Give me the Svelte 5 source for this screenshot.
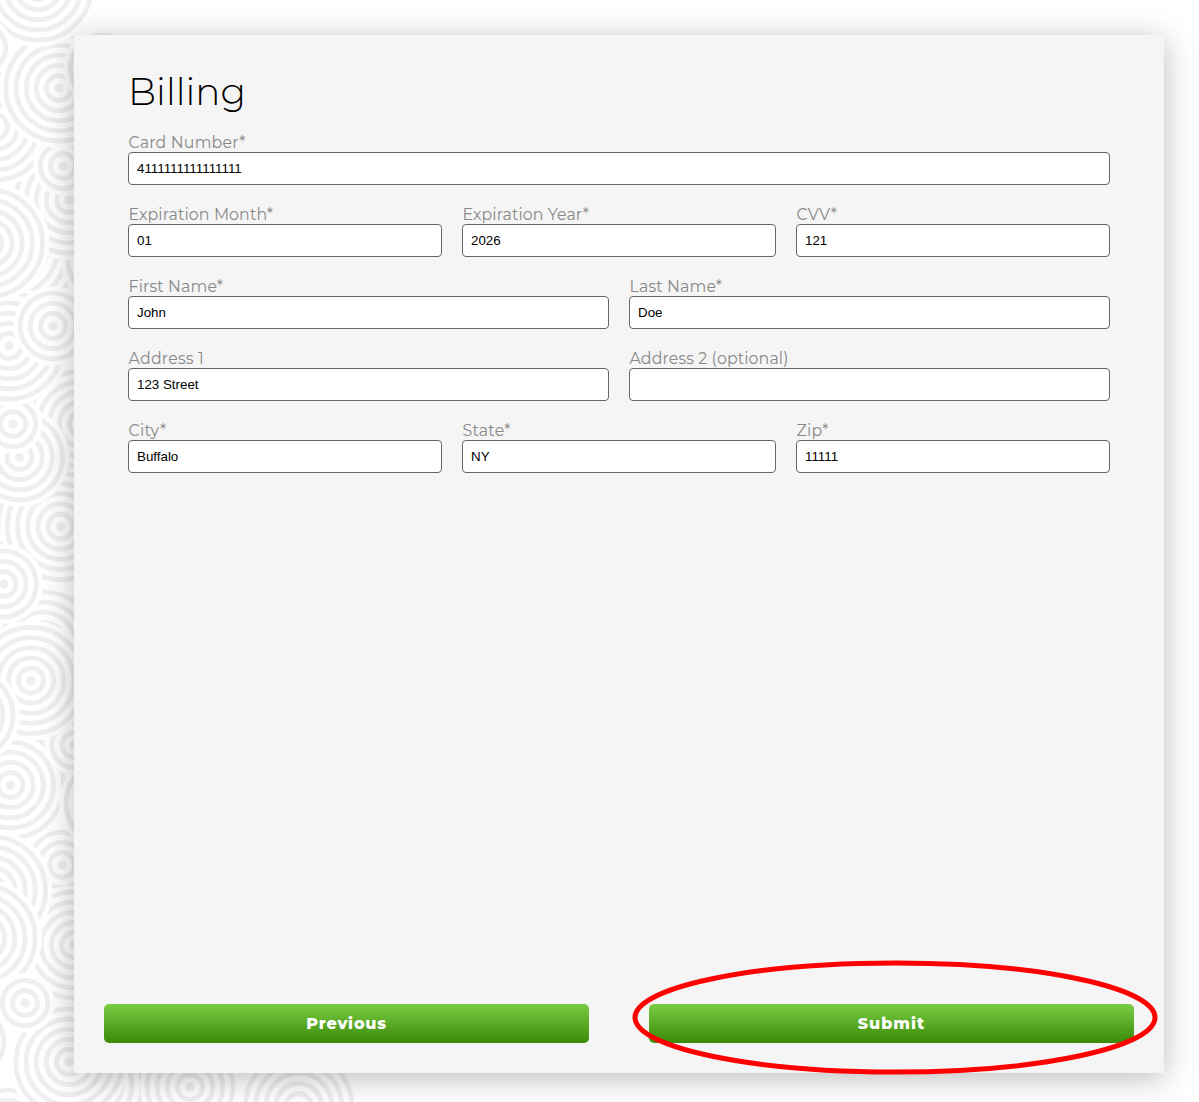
<script>
  // Decorative discs, painted back to front: [centre x, centre y, ring count]
  const discs = [
    [5, 245, 7], [101, 262, 3], [69, 200, 5], [-5, 127, 5], [63, 166, 2],
    [59, 88, 5], [38, -13, 5], [103, 68, 3], [-17, 48, 2],
    [43, 645, 5], [-30, 515, 4], [82, 424, 5], [60.5, 526.5, 5],
    [19.5, 457, 4], [13, 424, 2], [9, 346, 5], [-10.6, 243, 5], [53, 326, 3],
    [62, 865, 3], [10.5, 785, 5], [109, 803, 4], [74.5, 745, 2],
    [31, 680.5, 5], [-30, 715, 4], [3.5, 584, 3],
    [74, 945, 5], [-7.6, 890, 5], [-18, 938, 5],
    [-29, 1042, 3], [8, 1123, 3], [89, 1085, 5], [69, 1062, 5], [25, 1003, 2],
    [298.7, 1106, 5], [190, 1087, 4]
  ];

  const rows = [
    [{ label: 'Card Number*', width: 117, value: '4111111111111111' }],
    [
      { label: 'Expiration Month*', width: 144.5, value: '01' },
      { label: 'Expiration Year*', width: 126.5, value: '2026' },
      { label: 'CVV*', width: 40.5, value: '121' }
    ],
    [
      { label: 'First Name*', width: 94.5, value: 'John' },
      { label: 'Last Name*', width: 92.5, value: 'Doe' }
    ],
    [
      { label: 'Address 1', width: 75.5, value: '123 Street' },
      { label: 'Address 2 (optional)', width: 159, value: '' }
    ],
    [
      { label: 'City*', width: 38, value: 'Buffalo' },
      { label: 'State*', width: 48, value: 'NY' },
      { label: 'Zip*', width: 32, value: '11111' }
    ]
  ];

  // Spreads the letters so that the text takes the given width.
  function track(node, width) {
    const natural = node.getBoundingClientRect().width;
    node.style.letterSpacing = `${(width - natural) / node.textContent.length}px`;
  }
</script>

<div class="page">
  <svg class="pattern" width="400" height="1102" viewBox="0 0 400 1102" aria-hidden="true">
    {#each discs as [x, y, n]}
      <circle cx={x} cy={y} r={15 + 10.15 * (n - 1) + 4.5} fill="#fff" />
      <circle cx={x} cy={y} r="4.6" fill="#efefef" />
      {#each Array(n) as _, i}
        <circle cx={x} cy={y} r={12.5 + 10.15 * i} fill="none" stroke="#efefef" stroke-width="4.8" />
      {/each}
    {/each}
  </svg>

  <main class="card">
    <form class="form" onsubmit={(e) => e.preventDefault()}>
      <h1><span use:track={118}>Billing</span></h1>
      {#each rows as row}
        <div class="row">
          {#each row as field}
            <label class="field">
              <span class="caption"><span use:track={field.width}>{field.label}</span></span>
              <input type="text" value={field.value} />
            </label>
          {/each}
        </div>
      {/each}
    </form>
    <div class="actions">
      <button type="button"><span use:track={80.5}>Previous</span></button>
      <button type="button"><span use:track={67.5}>Submit</span></button>
    </div>
  </main>

  <svg class="marker" width="528" height="118" viewBox="0 0 528 118" aria-hidden="true">
    <ellipse cx="264" cy="58.5" rx="260" ry="54.5" fill="none" stroke="#f00" stroke-width="5" />
  </svg>
</div>

<style>
  :global(body) {
    background: #fff;
  }
  .page {
    position: relative;
    box-sizing: border-box;
    height: 1102px;
    padding: 35px 35px 29px 74px;
    overflow: hidden;
    font-family: Montserrat, Inter, sans-serif;
  }
  .pattern {
    position: absolute;
    left: 0;
    top: 0;
  }
  .card {
    position: relative;
    box-sizing: border-box;
    height: 1038px;
    display: flex;
    flex-direction: column;
    justify-content: space-between;
    padding: 32px 30px 30px;
    background: #f5f5f5;
    box-shadow: 0 5px 30px rgba(0, 0, 0, 0.27);
  }
  .form {
    padding: 0 24px;
  }
  h1 {
    margin: 0 0 17px;
    font-size: 37.3px;
    font-weight: 300;
    line-height: 49px;
    color: #000;
  }
  .row {
    display: flex;
    gap: 20px;
    margin-bottom: 20px;
  }
  .field {
    flex: 1 1 0;
    min-width: 0;
    display: flex;
    flex-direction: column;
  }
  .caption {
    height: 19px;
    padding-left: 0.5px;
    font-size: 15.8px;
    line-height: 19px;
    color: #888;
    white-space: nowrap;
  }
  input {
    box-sizing: border-box;
    width: 100%;
    height: 33px;
    padding: 0 8px;
    border: 1px solid #666;
    border-radius: 4px;
    background: #fff;
    font: 13.333px 'Liberation Sans', Arial, sans-serif;
    color: #000;
  }
  .actions {
    display: flex;
    gap: 60px;
  }
  button {
    flex: 1;
    height: 39px;
    padding: 0;
    border: 0;
    border-radius: 5px;
    background: linear-gradient(#7acc44, #398b08);
    font-family: Montserrat, Inter, sans-serif;
    font-size: 16px;
    font-weight: 800;
    color: #fff;
  }
  .marker {
    position: absolute;
    left: 631px;
    top: 959px;
    pointer-events: none;
  }
</style>
